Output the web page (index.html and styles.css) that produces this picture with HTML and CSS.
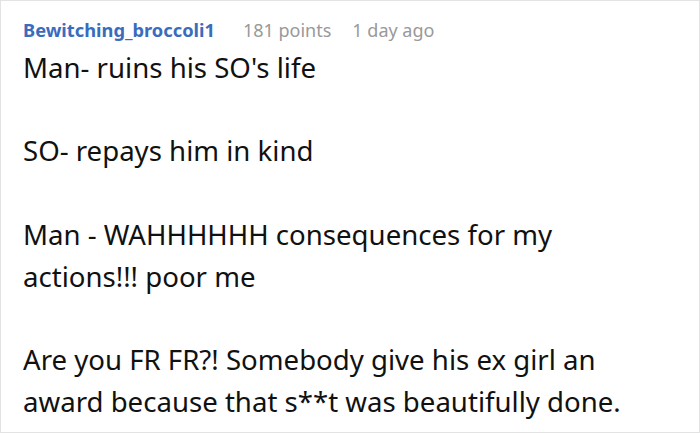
FILE: index.html
```html
<!DOCTYPE html>
<html>
<head>
<meta charset="utf-8">
<link rel="stylesheet" href="styles.css">
</head>
<body>
<div class="comment">
  <div class="meta">
    <span class="user">Bewitching_broccoli1</span>
    <span class="info">181 points</span>
    <span class="info">1 day ago</span>
  </div>
  <div class="text">Man- ruins his SO's life<br><br>SO- repays him in kind<br><br>Man - WAHHHHHH consequences for my actions!!! poor me<br><br>Are you FR FR?! Somebody give his ex girl an award because that s**t was beautifully done.</div>
</div>
</body>
</html>
```
FILE: styles.css
```css
html, body {
  margin: 0;
  padding: 0;
  background: #fff;
}
.comment {
  box-sizing: border-box;
  width: 700px;
  height: 433px;
  border: 1px solid #e3e3e3;
  padding: 15.5px 22px 0 22px;
  font-family: "Noto Sans", sans-serif;
  overflow: hidden;
}
.meta {
  display: flex;
  align-items: baseline;
  gap: 21px;
  height: 30px;
}
.user {
  color: #3a6cbd;
  font-weight: 700;
  font-size: 18.3px;
  margin-right: 7px;
}
.info {
  color: #999;
  font-size: 18px;
}
.text {
  color: #111;
  font-size: 27.6px;
  line-height: 41.85px;
  max-width: 630px;
}
```
